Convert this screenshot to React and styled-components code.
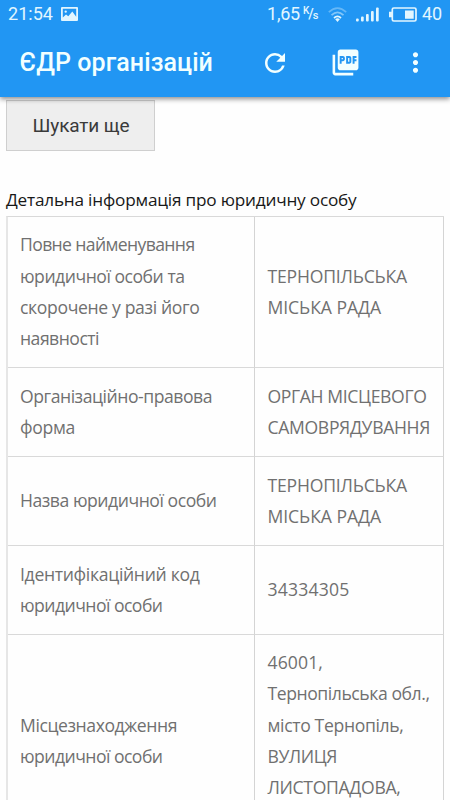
import React, { useLayoutEffect, useRef, useState } from "react";
import styled, { createGlobalStyle } from "styled-components";
import { MdMoreVert, MdPictureAsPdf, MdRefresh } from "react-icons/md";

const GlobalStyle = createGlobalStyle`
  * {
    box-sizing: border-box;
  }
  body {
    margin: 0;
    background: #fefefe;
    overflow: hidden;
  }
`;

const Screen = styled.div`
  width: 450px;
  height: 800px;
  overflow: hidden;
  background: #fefefe;
  font-family: "Open Sans", "Noto Sans", sans-serif;
`;

const Header = styled.header`
  position: relative;
  height: 97px;
  background: #2196f3;
  color: #f2ffff;
  font-family: Roboto, sans-serif;
  box-shadow: 0 2px 5px rgba(0, 0, 0, 0.45);
`;

const StatusBar = styled.div`
  display: flex;
  align-items: center;
  height: 28px;
  padding: 0 8px;
  font-size: 18px;
  line-height: 28px;
  color: #e2f6ff;
`;

const StatusIcon = styled.svg`
  display: block;
  flex: none;
  margin-left: ${(props) => props.$gap}px;
`;

const Speed = styled.div`
  display: flex;
  margin-left: auto;
  width: 52px;
`;

const SpeedUnit = styled.span`
  display: flex;
  margin-left: 3px;
  line-height: 22px;
`;

const UnitPart = styled.span`
  font-size: ${(props) => props.$size}px;
  font-weight: 500;
  padding-top: ${(props) => props.$drop}px;
  margin-right: -1px;
`;

const Battery = styled.span`
  width: 20px;
  margin-left: 5px;
`;

const Toolbar = styled.div`
  display: flex;
  align-items: center;
  height: 69px;
  padding: 0 20px 0 19.5px;
`;

const Title = styled.h1`
  flex: 1;
  margin: 0;
  font-size: 25px;
  font-weight: 500;
  line-height: 32px;
`;

const IconButton = styled.button`
  display: flex;
  justify-content: center;
  width: 30px;
  margin: 0 0 0 ${(props) => props.$gap || 0}px;
  padding: 0;
  border: 0;
  background: none;
  color: inherit;
  svg {
    flex: none;
  }
`;

const Content = styled.main`
  padding: 3px 6px 0;
`;

const SearchButton = styled.button`
  display: block;
  width: 149px;
  height: 51px;
  padding: 0 0 1px 25.5px;
  border: 1px solid #cfcfcf;
  background: #eeeeee;
  color: #3a3a3a;
  text-align: left;
  font-family: Roboto, sans-serif;
  font-size: 19px;
`;

const Caption = styled.h2`
  margin: 33px 0 0;
  font-size: 17.2px;
  font-weight: 400;
  line-height: 31px;
  padding-bottom: 1px;
  color: #181818;
`;

const Table = styled.div`
  width: 438px;
  border-left: 2px solid #e6e6e6;
  border-top: 1px solid #d9d9d9;
`;

const Row = styled.div`
  display: grid;
  grid-template-columns: 247px 189px;
  height: ${(props) => props.$height}px;
`;

const Cell = styled.div`
  display: flex;
  flex-direction: column;
  justify-content: ${(props) => (props.$top ? "flex-start" : "center")};
  padding: 12px 0 12px ${(props) => props.$indent}px;
  border-right: 1px solid #d4d4d4;
  border-bottom: 1px solid #d9d9d9;
  color: #707070;
  font-size: 17.6px;
  font-weight: 400;
  line-height: 31.3px;
`;

const Line = styled.span`
  display: block;
  width: max-content;
  white-space: nowrap;
`;

// Spreads the letters of one line over the given width
const FitLine = ({ text, width }) => {
  const ref = useRef(null);
  const [spacing, setSpacing] = useState(0);
  useLayoutEffect(() => {
    const natural = ref.current.getBoundingClientRect().width;
    setSpacing((width - natural) / text.length);
  }, []);
  return (
    <Line ref={ref} style={{ letterSpacing: `${spacing}px` }}>
      {text}
    </Line>
  );
};

const rows = [
  {
    height: 151,
    label: [
      ["Повне найменування", 174.5],
      ["юридичної особи та", 164.5],
      ["скорочене у разі його", 179.5],
      ["наявності", 79],
    ],
    value: [
      ["ТЕРНОПІЛЬСЬКА", 139.5],
      ["МІСЬКА РАДА", 113.5],
    ],
  },
  {
    height: 89,
    label: [
      ["Організаційно-правова", 192],
      ["форма", 55],
    ],
    value: [
      ["ОРГАН МІСЦЕВОГО", 159],
      ["САМОВРЯДУВАННЯ", 162.5],
    ],
  },
  {
    height: 89,
    label: [["Назва юридичної особи", 196.5]],
    value: [
      ["ТЕРНОПІЛЬСЬКА", 139.5],
      ["МІСЬКА РАДА", 113.5],
    ],
  },
  {
    height: 89,
    label: [
      ["Ідентифікаційний код", 179.5],
      ["юридичної особи", 142.5],
    ],
    value: [["34334305", 82]],
  },
  {
    height: 213,
    top: true,
    label: [
      ["Місцезнаходження", 157],
      ["юридичної особи", 142.5],
    ],
    value: [
      ["46001,", 55.5],
      ["Тернопільська обл.,", 162],
      ["місто Тернопіль,", 136],
      ["ВУЛИЦЯ", 69.5],
      ["ЛИСТОПАДОВА,", 133],
    ],
  },
];

const App = () => {
  return (
    <Screen>
      <GlobalStyle />
      <Header>
        <StatusBar>
          <FitLine text="21:54" width={45} />
          <StatusIcon $gap={8} width="17" height="14" viewBox="0 0 17 14">
            <path
              fill="currentColor"
              fillRule="evenodd"
              d="M1 0h15a1 1 0 0 1 1 1v12a1 1 0 0 1-1 1H1a1 1 0 0 1-1-1V1a1 1 0 0 1 1-1zM1.8 1.8v8.7L5 7.5l2.3 1.8 4-4.8 3.9 5.2V1.8zM4.7 3.4a1.2 1.2 0 1 1 0 2.4 1.2 1.2 0 0 1 0-2.4z"
            />
          </StatusIcon>
          <Speed>
            <FitLine text="1,65" width={33} />
            <SpeedUnit>
              <UnitPart $size={10} $drop={0}>K</UnitPart>
              <UnitPart $size={14} $drop={3}>/</UnitPart>
              <UnitPart $size={11} $drop={5}>s</UnitPart>
            </SpeedUnit>
          </Speed>
          <StatusIcon $gap={9} width="19" height="15" viewBox="0 0 19 15">
            <g fill="none" stroke="currentColor" strokeWidth="1.7">
              <path opacity="0.35" d="M.8 5.2Q9.5-2.8 18.2 5.2" />
              <path opacity="0.5" d="M3.5 8.2q6-5.6 12 0" />
              <path d="M6 11q3.5-3.2 7 0" />
            </g>
            <path fill="currentColor" d="M7.2 12.2q2.3-2 4.6 0L9.5 15z" />
          </StatusIcon>
          <StatusIcon $gap={9} width="24" height="15" viewBox="0 0 24 15">
            <g fill="currentColor">
              <rect x="0" y="11.5" width="2.7" height="3" rx="1" />
              <rect x="5" y="9.5" width="2.7" height="5" rx="1" />
              <rect x="10" y="7" width="2.7" height="7.5" rx="1" />
              <rect x="15" y="4" width="2.7" height="10.5" rx="1" />
              <rect x="20" y="0.5" width="2.7" height="14" rx="1" />
            </g>
          </StatusIcon>
          <StatusIcon $gap={9} width="28" height="15" viewBox="0 0 28 15">
            <rect
              x="3.3"
              y="1"
              width="23.7"
              height="13"
              rx="1.5"
              fill="none"
              stroke="currentColor"
              strokeWidth="1.7"
            />
            <path fill="currentColor" d="M0 4.7h3v5.6H0zM16 3.5h8.7v8.2H16z" />
          </StatusIcon>
          <Battery>
            <FitLine text="40" width={20} />
          </Battery>
        </StatusBar>
        <Toolbar>
          <Title>
            <FitLine text="ЄДР організацій" width={193.5} />
          </Title>
          <IconButton aria-label="refresh">
            <MdRefresh size={30} />
          </IconButton>
          <IconButton $gap={40} aria-label="pdf">
            <MdPictureAsPdf size={31} />
          </IconButton>
          <IconButton $gap={40} aria-label="menu">
            <MdMoreVert size={31} />
          </IconButton>
        </Toolbar>
      </Header>
      <Content>
        <SearchButton>
          <FitLine text="Шукати ще" width={97} />
        </SearchButton>
        <Caption>
          <FitLine
            text="Детальна інформація про юридичну особу"
            width={350.5}
          />
        </Caption>
        <Table>
          {rows.map((row, index) => {
            return (
              <Row key={index} $height={row.height}>
                <Cell $indent={12}>
                  {row.label.map(([text, width]) => (
                    <FitLine key={text} text={text} width={width} />
                  ))}
                </Cell>
                <Cell $indent={12.5} $top={row.top}>
                  {row.value.map(([text, width]) => (
                    <FitLine key={text} text={text} width={width} />
                  ))}
                </Cell>
              </Row>
            );
          })}
        </Table>
      </Content>
    </Screen>
  );
};

export default App;
